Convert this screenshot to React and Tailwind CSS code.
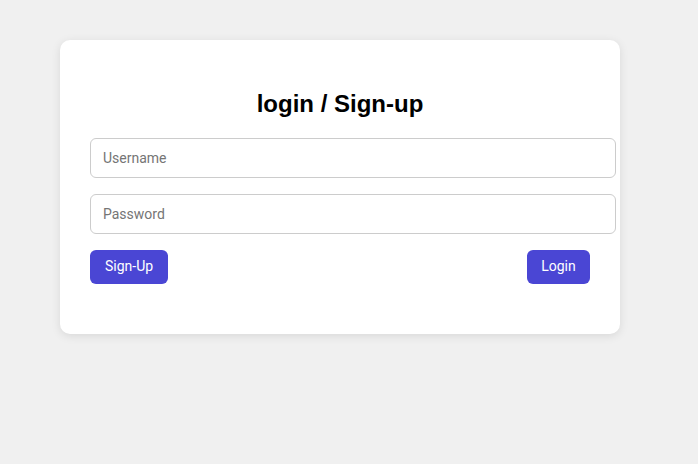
import React, { useState } from 'react';

const App = () => {
    const [username, setUsername] = useState('');
    const [password, setPassword] = useState('');

    return (
        <div className="min-h-[464px] bg-[#f0f0f0] pt-[40px] pl-[60px]" style={{ fontFamily: '"Liberation Sans", Arial, sans-serif' }}>
            <div className="w-[560px] rounded-[10px] bg-white px-[30px] pt-[30px] pb-[50px] shadow-[0_2px_10px_rgba(0,0,0,0.1)]">
                <h2 className="mt-[20px] mb-[20px] text-center text-[24px] leading-[27.6px] font-bold text-black">
                    login / Sign-up
                </h2>
                <div className="flex flex-col gap-[16px]">
                    <input
                        type="text"
                        placeholder="Username"
                        value={username}
                        onChange={(e) => setUsername(e.target.value)}
                        className="h-[40px] w-[526px] rounded-[6px] border border-[#cccccc] px-[12px] text-[14px] text-black outline-none placeholder:text-[#757575] font-['Roboto',sans-serif]"
                    />
                    <input
                        type="password"
                        placeholder="Password"
                        value={password}
                        onChange={(e) => setPassword(e.target.value)}
                        className="h-[40px] w-[526px] rounded-[6px] border border-[#cccccc] px-[12px] text-[14px] text-black outline-none placeholder:text-[#757575] font-['Roboto',sans-serif]"
                    />
                </div>
                <div className="mt-[16px] flex justify-between">
                    <button className="h-[34px] rounded-[6px] bg-[#4a46d4] px-[15px] text-[14px] text-white font-['Roboto',sans-serif]">
                        Sign-Up
                    </button>
                    <button className="h-[34px] w-[63px] rounded-[6px] bg-[#4a46d4] text-[14px] text-white font-['Roboto',sans-serif]">
                        Login
                    </button>
                </div>
            </div>
        </div>
    );
};

export default App;
